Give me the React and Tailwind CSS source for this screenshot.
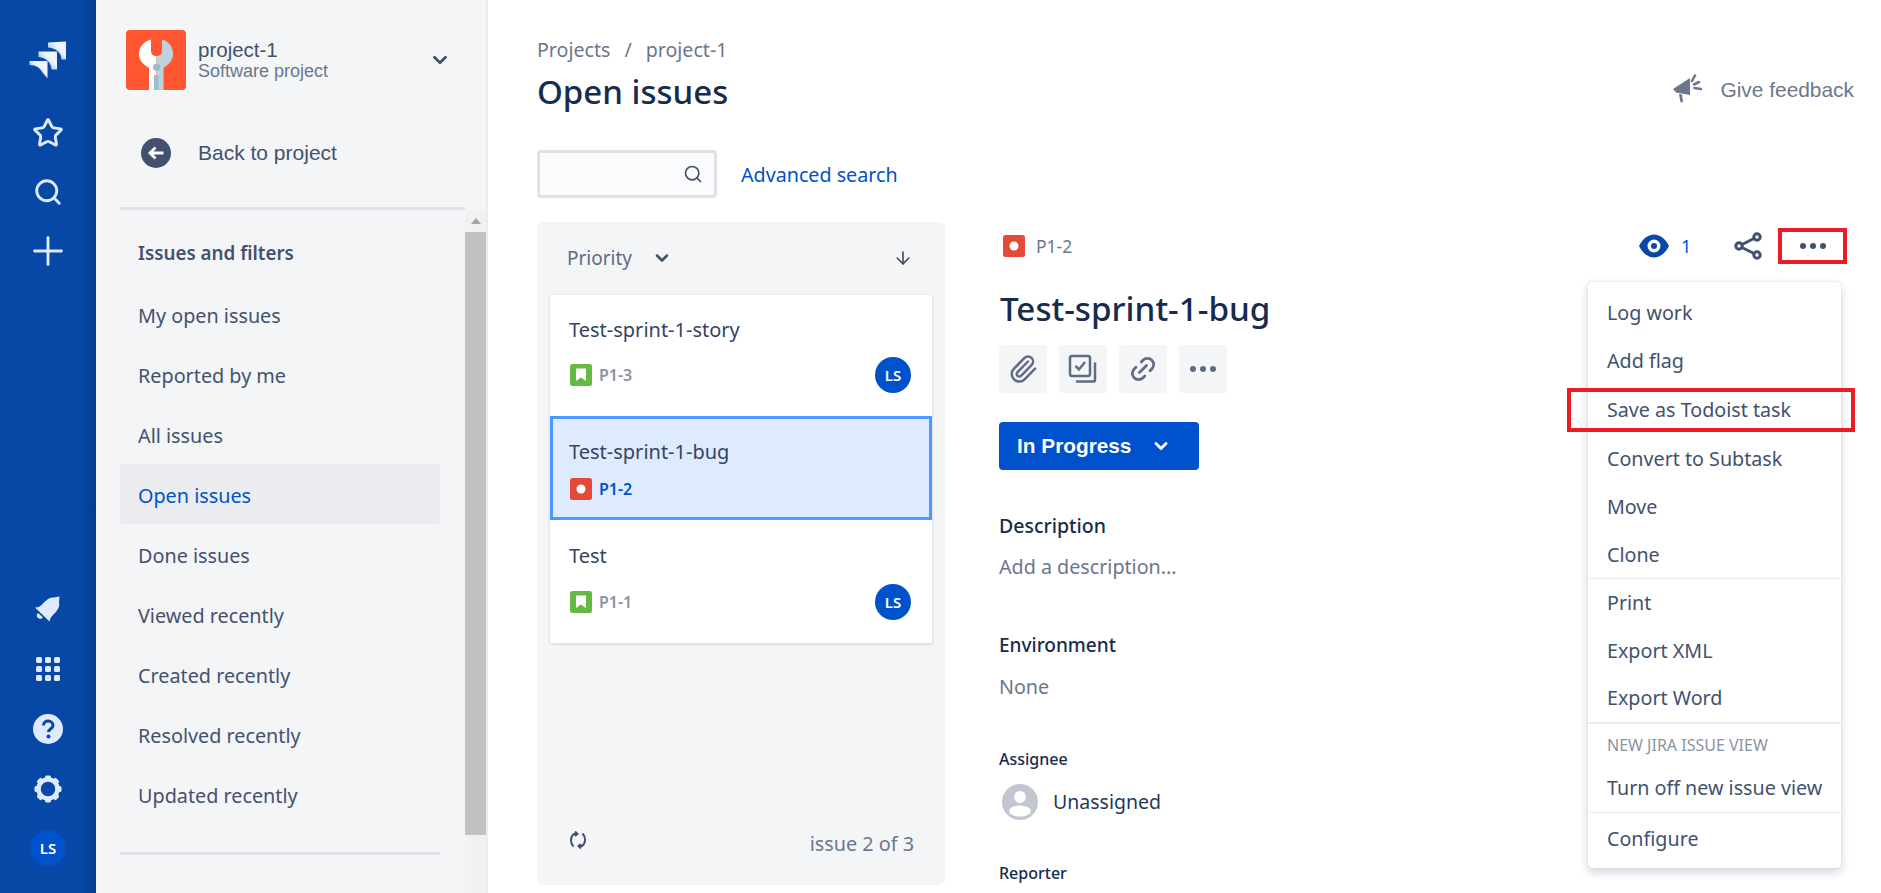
import { Star, Search, Plus, ChevronDown, ArrowDown, Paperclip, Link2 } from 'lucide-react'

const NAV_ITEMS = ['My open issues', 'Reported by me', 'All issues', 'Open issues', 'Done issues', 'Viewed recently', 'Created recently', 'Resolved recently', 'Updated recently']

const JiraLogo = () => (
  <svg width="38" height="38" viewBox="0 0 38 38">
    <defs>
      <linearGradient id="jl" x1="1" y1="0" x2="0" y2="1">
        <stop offset="0.4" stopColor="#eef4ff" />
        <stop offset="1" stopColor="#4c8ae0" />
      </linearGradient>
    </defs>
    <path d="M19 1.500L37 0.500V18.500H32.500C32.500 12 27 7 19 6.500Z" fill="url(#jl)" />
    <path d="M9.500 10.500H28V28.500H22.500C22.500 22 17 16.500 9.500 16Z" fill="url(#jl)" />
    <path d="M0.500 20H18.500V37.500L13.500 31.500C11.500 27 7 24 0.500 24Z" fill="url(#jl)" />
  </svg>
)

const WrenchTile = () => (
  <svg width="60" height="60" viewBox="0 0 60 60">
    <rect width="60" height="60" rx="4" fill="#ff5630" />
    <path d="M30.500 26C27 26 25 24 25 21V9.500C18 11 13 17 13 24C13 31 18 35 23 38V60H30.500Z" fill="#fff" />
    <path d="M30.500 26C34 26 36 24 36 21V9.500C43 11 47 17 47 24C47 31 42 35 37.500 38V60H30.500Z" fill="#bfd1da" />
    <rect x="28" y="45" width="4.700" height="15" fill="#9fbccb" />
    <circle cx="30.700" cy="37.300" r="3.700" fill="#9fbccb" />
  </svg>
)

const Bell = () => (
  <svg width="28" height="28" viewBox="0 0 28 28" fill="#deebff">
    <path d="M1 12.500C5 12.500 7 11 10 7.500C13 4 17 2 20 2.500L25.500 1.500L25 7.500C26 11 24 15 21 18C18 21 16 23 15.500 26.500Z" />
    <path d="M4 18L9 22.500C7.500 24.500 5 24 3.500 22.500C2.500 21 2.500 19 4 18Z" />
  </svg>
)

const Grid = () => (
  <svg width="24" height="24" viewBox="0 0 24 24" fill="#deebff">
    {[0, 9, 18].map((y) =>
      [0, 9, 18].map((x) => <rect key={`${x}-${y}`} x={x} y={y} width="6" height="6" rx="1.500" />),
    )}
  </svg>
)

const Help = () => (
  <svg width="30" height="30" viewBox="0 0 30 30">
    <circle cx="15" cy="15" r="15" fill="#deebff" />
    <path d="M10.500 11.500C10.500 8.500 13 7 15 7C18 7 20 9 20 11.500C20 14.500 15.500 15 15.500 18" fill="none" stroke="#0747a6" strokeWidth="3" />
    <circle cx="15.500" cy="22.500" r="2" fill="#0747a6" />
  </svg>
)

const Gear = () => (
  <svg width="28" height="28" viewBox="0 0 28 28">
    <circle cx="14" cy="14" r="9.500" fill="none" stroke="#deebff" strokeWidth="4.500" />
    {[0, 45, 90, 135, 180, 225, 270, 315].map((a) => (
      <rect key={a} x="11" y="0.500" width="6" height="5" rx="1.500" fill="#deebff" transform={`rotate(${a} 14 14)`} />
    ))}
  </svg>
)

const Avatar = () => (
  <div className="w-9 h-9 shrink-0 rounded-full bg-[#0052cc] flex items-center justify-center text-white text-[15px] font-semibold font-['Noto_Sans',sans-serif]">LS</div>
)

const StoryIcon = () => (
  <svg width="22" height="22" viewBox="0 0 22 22" className="shrink-0">
    <rect width="22" height="22" rx="2.500" fill="#65ba43" />
    <path d="M6 4.500H16V17L11 13.500L6 17Z" fill="#fff" />
  </svg>
)

const BugIcon = () => (
  <svg width="22" height="22" viewBox="0 0 22 22" className="shrink-0">
    <rect width="22" height="22" rx="2.500" fill="#e5493a" />
    <circle cx="11" cy="11" r="4.500" fill="#fff" />
  </svg>
)

const Dots = ({ color = '#42526e' }) => (
  <svg width="28" height="8" viewBox="0 0 28 8" fill={color}>
    <circle cx="4" cy="4" r="3" />
    <circle cx="14" cy="4" r="3" />
    <circle cx="24" cy="4" r="3" />
  </svg>
)

const Megaphone = () => (
  <svg width="30" height="30" viewBox="0 0 30 30" fill="#6b778c">
    <path d="M1 15L18 4V21L4 18.500Z" />
    <path d="M7 20L10 20.500L11 28L8.500 28.500Z" />
    <path d="M20 7L23 1.500M22 10.500L27 8M22.500 14L29 15" stroke="#6b778c" strokeWidth="2.600" strokeLinecap="round" />
  </svg>
)

const Checklist = () => (
  <svg width="30" height="30" viewBox="0 0 30 30" fill="none" stroke="#5e6c84" strokeWidth="2.500">
    <rect x="2" y="2" width="20" height="20" rx="2" />
    <path d="M7.500 12L11 15.500L17 8" />
    <path d="M27 8.500V26C27 27 26.500 27.500 25.500 27.500H8" />
  </svg>
)

const Refresh = () => (
  <svg width="18" height="18" viewBox="0 0 18 18" fill="none" stroke="#42526e" strokeWidth="2">
    <path d="M4.500 15.500C1 12 1 6 5 3H8" />
    <path d="M6 0.500L8.500 3L6 5" />
    <path d="M13.500 2.500C17 6 17 12 13 15H10" />
    <path d="M12 17.500L9.500 15L12 13" />
  </svg>
)

const Eye = () => (
  <svg width="30" height="24" viewBox="0 0 30 24">
    <path d="M0 12C4 4 10 0.500 15 0.500C20 0.500 26 4 30 12C26 20 20 23.500 15 23.500C10 23.500 4 20 0 12Z" fill="#0747a6" />
    <circle cx="15" cy="12" r="6.500" fill="#fff" />
    <circle cx="15" cy="12" r="3" fill="#0747a6" />
  </svg>
)

const Share = () => (
  <svg width="28" height="28" viewBox="0 0 28 28" fill="none" stroke="#42526e" strokeWidth="3">
    <circle cx="23" cy="5" r="3.200" />
    <circle cx="5" cy="14" r="3.200" />
    <circle cx="23" cy="23" r="3.200" />
    <path d="M8 12.500L20 6.500M8 15.500L20 21.500" />
  </svg>
)

const Unassigned = () => (
  <svg width="36" height="36" viewBox="0 0 36 36" className="shrink-0">
    <circle cx="18" cy="18" r="18" fill="#c1c7d0" />
    <circle cx="18" cy="13" r="6" fill="#fff" />
    <ellipse cx="18" cy="27" rx="11" ry="5.500" fill="#fff" />
  </svg>
)

function IssueCard({ title, id, type, selected, avatar, className }) {
  return (
    <div className={`${selected ? 'bg-[#deebff] border-[3px] border-[#4c9aff] px-[16px]' : 'bg-white px-[19px]'} ${className}`}>
      <p className="text-[20px] leading-[26px] text-[#344563] truncate">{title}</p>
      <div className="flex items-center">
        <span className="ml-px">{type === 'bug' ? <BugIcon /> : <StoryIcon />}</span>
        <span className={`ml-[7px] text-[16px] font-semibold ${selected ? 'text-[#0052cc]' : 'text-[#8993a4]'}`}>{id}</span>
        {avatar && <div className="ml-auto mr-[2px]"><Avatar /></div>}
      </div>
    </div>
  )
}

function MenuItem({ children, className = 'h-12' }) {
  return <div className={`flex items-center px-[19px] text-[19.700px] text-[#42526e] whitespace-nowrap ${className}`}>{children}</div>
}

export default function App() {
  return (
    <div className="relative flex w-[1881px] h-[893px] overflow-hidden bg-white font-['Noto_Sans',sans-serif]">
      {/* global nav */}
      <nav className="w-24 shrink-0 flex flex-col justify-between bg-[linear-gradient(to_right,#0747a6_86%,#053a8e)] pt-[30px] pb-[15px]">
        <div className="flex flex-col items-center">
          <div className="h-[60px] mb-[13px] flex items-center"><JiraLogo /></div>
          <div className="h-[60px] flex items-center"><Star size={32} color="#deebff" strokeWidth={2.2} /></div>
          <div className="h-[58px] flex items-center"><Search size={30} color="#deebff" strokeWidth={2.3} /></div>
          <div className="h-[60px] flex items-center"><Plus size={46} color="#deebff" strokeWidth={1.5} /></div>
        </div>
        <div className="flex flex-col items-center">
          <div className="h-[60px] flex items-center"><Bell /></div>
          <div className="h-[60px] flex items-center"><Grid /></div>
          <div className="h-[60px] flex items-center"><Help /></div>
          <div className="h-[59px] flex items-center"><Gear /></div>
          <div className="h-[60px] flex items-center"><Avatar /></div>
        </div>
      </nav>

      {/* project sidebar */}
      <aside className="w-[392px] shrink-0 flex flex-col bg-[#f4f5f7] border-r-2 border-[#ebecf0]">
        <div className="h-[60px] mt-[30px] ml-[30px] flex items-center">
          <WrenchTile />
          <div className="ml-3 font-['Liberation_Sans',sans-serif]">
            <p className="text-[20.500px] leading-[22px] text-[#42526e]">project-1</p>
            <p className="text-[18px] leading-[21px] text-[#6b778c]">Software project</p>
          </div>
          <ChevronDown size={22} color="#42526e" strokeWidth={3} className="ml-auto mr-[35px]" />
        </div>
        <div className="h-[30px] mt-12 ml-[45px] flex items-center">
          <div className="w-[30px] h-[30px] rounded-full bg-[#42526e] flex items-center justify-center">
            <svg width="16" height="14" viewBox="0 0 16 14" fill="none" stroke="#fff" strokeWidth="2.800">
              <path d="M7.500 1.500L2 7L7.500 12.500M2.500 7H15.500" />
            </svg>
          </div>
          <span className="ml-[27px] text-[21px] text-[#42526e] font-['Liberation_Sans',sans-serif]">Back to project</span>
        </div>
        <div className="h-[3px] mt-[39px] ml-6 mr-[21px] bg-[#dfe1e6]" />
        <div className="flex flex-1 min-h-0">
          <div className="w-[369px] shrink-0 pl-6">
            <div className="w-80">
              <p className="h-11 mt-[21px] mb-[9px] pl-[18px] flex items-center text-[18.800px] font-semibold text-[#42526e]">Issues and filters</p>
              {NAV_ITEMS.map((item) => (
                <div
                  key={item}
                  className={`h-[60px] pl-[18px] pt-[3px] flex items-center rounded-[3px] text-[19.800px] ${item === 'Open issues' ? 'bg-[#ebecf0] text-[#0052cc]' : 'text-[#42526e]'}`}
                >
                  {item}
                </div>
              ))}
              <div className="h-[3px] mt-7 bg-[#dfe1e6]" />
            </div>
          </div>
          <div className="w-[21px] shrink-0 bg-[#f1f1f1] flex flex-col">
            <div className="h-[22px] flex items-center justify-center">
              <div className="w-0 h-0 border-x-[5px] border-x-transparent border-b-[6px] border-b-[#a3a3a3]" />
            </div>
            <div className="h-[603px] bg-[#c1c1c1]" />
          </div>
        </div>
      </aside>

      {/* main content */}
      <main className="flex-1 min-w-0 pl-[49px]">
        <div className="flex justify-between pt-9 pr-[27px]">
          <div>
            <div className="h-7 flex items-center text-[19.600px] text-[#6b778c]">
              <span>Projects</span>
              <span className="mx-[14px]">/</span>
              <span>project-1</span>
            </div>
            <h1 className="h-[56px] mb-[2px] flex items-center text-[33px] font-medium text-[#172b4d]">Open issues</h1>
          </div>
          <div className="h-[30px] mt-[38px] flex items-center">
            <Megaphone />
            <span className="ml-[18px] pt-px text-[20.900px] text-[#6b778c] font-['Liberation_Sans',sans-serif]">Give feedback</span>
          </div>
        </div>

        <div className="flex items-center mt-7 h-12">
          <div className="w-[180px] h-12 rounded-[4px] border-[3px] border-[#dfe1e6] bg-[#fafbfc] flex items-center justify-end pr-[11px]">
            <Search size={20} color="#42526e" strokeWidth={2} />
          </div>
          <span className="ml-6 pt-px text-[19.700px] text-[#0052cc]">Advanced search</span>
        </div>

        <div className="flex mt-6">
          <section className="w-[408px] h-[663px] shrink-0 flex flex-col rounded-[6px] bg-[#f4f5f7] px-[13px]">
            <div className="h-[72px] mb-px flex items-center pl-[17px] pr-[19px] text-[#42526e]">
              <span className="text-[19px] text-[#5e6c84]">Priority</span>
              <ChevronDown size={20} color="#42526e" strokeWidth={3} className="ml-[20px]" />
              <ArrowDown size={20} color="#42526e" strokeWidth={2} className="ml-auto" />
            </div>
            <div className="rounded-[3px] shadow-[0_1px_2px_1px_#dfe1e6] bg-white flex flex-col">
              <IssueCard title="Test-sprint-1-story" id="P1-3" avatar className="h-[120px] pt-[22px] [&>p]:mb-[14px] rounded-t-[3px]" />
              <IssueCard title="Test-sprint-1-bug" id="P1-2" type="bug" selected className="h-[104px] mt-[1px] pt-[20px] [&>p]:mb-[12px]" />
              <IssueCard title="Test" id="P1-1" className="h-[123px] pt-[23px] [&>p]:mb-[15px]" avatar />
            </div>
            <div className="mt-auto mb-[26px] pl-[19px] pr-[18px] flex items-center justify-between">
              <span className="block -mt-2"><Refresh /></span>
              <span className="text-[19.800px] text-[#6b778c]">issue 2 of 3</span>
            </div>
          </section>

          <section className="w-[847px] ml-[55px] shrink-0">
            <div className="h-12 flex items-center pl-[3px]">
              <BugIcon />
              <span className="ml-[11px] text-[17.500px] text-[#6b778c]">P1-2</span>
              <div className="ml-auto flex items-center">
                <Eye />
                <span className="ml-3 w-[24px] text-[18px] text-[#0052cc]">1</span>
                <span className="ml-[29px]"><Share /></span>
                <div className="ml-4 w-[69px] h-9 border-4 border-[#ed1c24] flex items-center justify-center"><Dots /></div>
              </div>
            </div>
            <h2 className="h-[46px] mt-4 flex items-center text-[33.200px] font-medium text-[#172b4d]">Test-sprint-1-bug</h2>
            <div className="flex gap-3 mt-[13px] -ml-px">
              <div className="w-12 h-12 rounded-[4px] bg-[#f4f5f7] flex items-center justify-center"><Paperclip size={30} color="#5e6c84" strokeWidth={2} /></div>
              <div className="w-12 h-12 rounded-[4px] bg-[#f4f5f7] flex items-center justify-center"><Checklist /></div>
              <div className="w-12 h-12 rounded-[4px] bg-[#f4f5f7] flex items-center justify-center"><Link2 size={30} color="#5e6c84" strokeWidth={2.2} className="-rotate-45" /></div>
              <div className="w-12 h-12 rounded-[4px] bg-[#f4f5f7] flex items-center justify-center"><Dots color="#5e6c84" /></div>
            </div>
            <div className="w-[200px] h-12 mt-[29px] -ml-px rounded-[4px] bg-[#0052cc] flex items-center pl-[18px] text-white">
              <span className="text-[20.800px] font-bold font-['Liberation_Sans',sans-serif]">In Progress</span>
              <ChevronDown size={20} color="#fff" strokeWidth={3.5} className="ml-[20px]" />
            </div>
            <p className="h-6 mt-11 -ml-px flex items-center text-[19.500px] font-medium text-[#172b4d]">Description</p>
            <p className="h-[26px] mt-4 -ml-px flex items-center text-[19.700px] text-[#6b778c]">Add a description...</p>
            <p className="h-6 mt-[53px] -ml-px flex items-center text-[19px] font-medium text-[#172b4d]">Environment</p>
            <p className="h-[26px] mt-[17px] -ml-px flex items-center text-[19.700px] text-[#6b778c]">None</p>
            <p className="h-[22px] mt-12 -ml-px flex items-center text-[16px] font-medium text-[#172b4d]">Assignee</p>
            <div className="flex items-center mt-[14px] ml-[2px]">
              <Unassigned />
              <span className="ml-[15px] text-[19.500px] text-[#253858]">Unassigned</span>
            </div>
            <p className="h-[22px] mt-[42px] -ml-px flex items-center text-[16px] font-medium text-[#172b4d]">Reporter</p>
          </section>
        </div>
      </main>

      {/* issue actions menu */}
      <div className="absolute left-[1588px] top-[282px] w-[253px] h-[586px] pt-[7px] rounded-[4px] bg-white shadow-[0_4px_10px_rgba(9,30,66,0.2),0_0_1px_rgba(9,30,66,0.3)]">
        <MenuItem>Log work</MenuItem>
        <MenuItem>Add flag</MenuItem>
        <MenuItem className="h-[49px]">Save as Todoist task</MenuItem>
        <MenuItem className="h-[49px]">Convert to Subtask</MenuItem>
        <MenuItem>Move</MenuItem>
        <MenuItem className="h-12 border-b border-[#ebecf0]">Clone</MenuItem>
        <MenuItem>Print</MenuItem>
        <MenuItem>Export XML</MenuItem>
        <MenuItem className="h-[49px] pb-px border-b-2 border-[#ebecf0] -mb-px">Export Word</MenuItem>
        <p className="h-7 mt-[8px] px-[19px] flex items-center text-[16px] text-[#8993a4]">NEW JIRA ISSUE VIEW</p>
        <MenuItem className="h-[49px] mt-[5px] border-b border-[#ebecf0]">Turn off new issue view</MenuItem>
        <MenuItem className="h-[50px] pt-[2px]">Configure</MenuItem>
      </div>

      {/* annotation box round the Todoist entry */}
      <div className="absolute left-[1567px] top-[388px] w-[288px] h-[44px] border-4 border-[#ed1c24]" />
    </div>
  )
}
